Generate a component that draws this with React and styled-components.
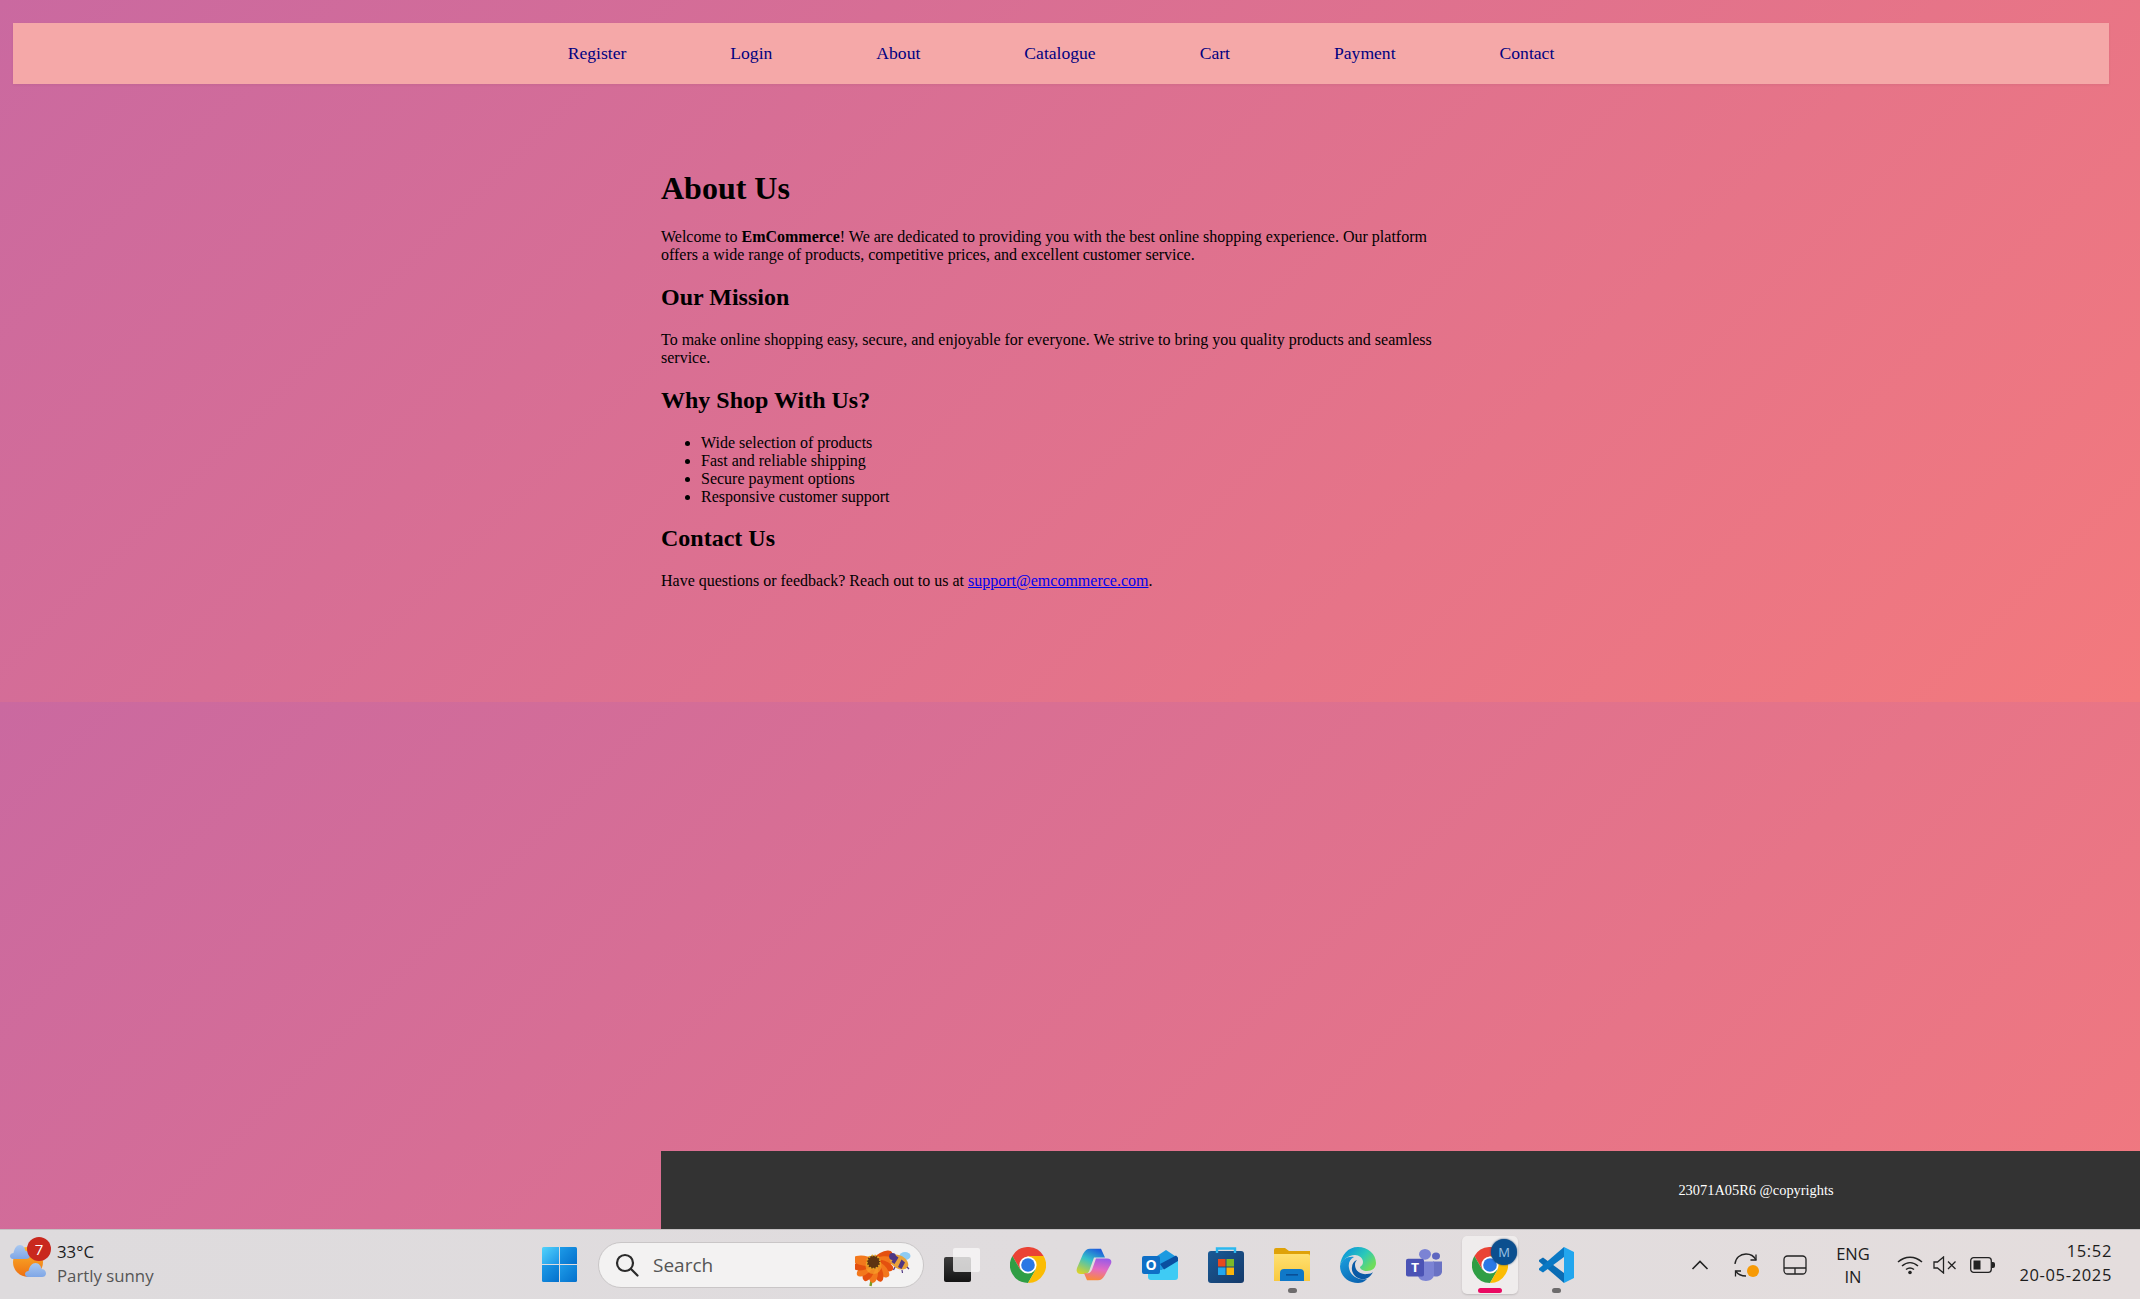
import React from "react";
import styled, { createGlobalStyle } from "styled-components";

const GlobalStyle = createGlobalStyle`
  html, body {
    margin: 0;
    padding: 0;
    height: 100%;
  }
  body {
    font-family: "Liberation Serif", "Times New Roman", serif;
    overflow: hidden;
  }
`;

const navLinks = ["Register", "Login", "About", "Catalogue", "Cart", "Payment", "Contact"];

const reasons = [
  "Wide selection of products",
  "Fast and reliable shipping",
  "Secure payment options",
  "Responsive customer support",
];

function WindowsIcon() {
  return (
    <svg width="35" height="35" viewBox="0 0 35 35">
      <defs>
        <linearGradient id="winA" x1="0" y1="0" x2="1" y2="1">
          <stop offset="0" stopColor="#52d3fb" />
          <stop offset="1" stopColor="#1b93e6" />
        </linearGradient>
        <linearGradient id="winB" x1="0" y1="0" x2="1" y2="1">
          <stop offset="0" stopColor="#1d9be8" />
          <stop offset="1" stopColor="#0470cc" />
        </linearGradient>
      </defs>
      <path d="M1.5 0H17V17H0V1.5A1.5 1.5 0 0 1 1.5 0Z" fill="url(#winA)" />
      <path d="M18 0H33.5A1.5 1.5 0 0 1 35 1.5V17H18Z" fill="url(#winB)" />
      <path d="M0 18H17V35H1.5A1.5 1.5 0 0 1 0 33.5Z" fill="url(#winB)" />
      <path d="M18 18H35V33.5A1.5 1.5 0 0 1 33.5 35H18Z" fill="url(#winB)" />
    </svg>
  );
}

function SearchGlass() {
  return (
    <svg width="24" height="24" viewBox="0 0 24 24" fill="none" stroke="#2b2b2b" strokeWidth="2.2" strokeLinecap="round">
      <circle cx="10" cy="10" r="8" />
      <path d="M16 16L22.5 22.5" />
    </svg>
  );
}

function SearchArt() {
  const petals = [-118, -94, -70, -46, -22, 2, 26, 50, 74, 98];
  return (
    <svg width="56" height="46" viewBox="0 0 56 46">
      <path d="M17 36L15.5 44" stroke="#7f9a22" strokeWidth="2.4" />
      {petals.map((a, i) => (
        <ellipse
          key={a}
          cx="18.5"
          cy="30"
          rx="5"
          ry="11"
          fill={i % 2 ? "#f3781c" : "#e4500f"}
          transform={`rotate(${a} 18.5 20)`}
        />
      ))}
      <circle cx="18.5" cy="24" r="8" fill="#f7a32a" fillOpacity="0.7" />
      <circle cx="18.5" cy="20" r="6.6" fill="#5e3412" stroke="#e2a823" strokeWidth="1.8" strokeDasharray="1.6 1.6" />
      <ellipse cx="50" cy="14" rx="5.5" ry="4" fill="#8ecbf2" />
      <ellipse cx="44" cy="20" rx="10" ry="6.5" fill="#e8a23a" transform="rotate(30 44 20)" />
      <path d="M40 13L36.5 20L39.5 22L43.5 15.5Z M46.5 17.5L43 25L46.5 27L50 20.5Z" fill="#4f3783" />
      <circle cx="37.5" cy="14.5" r="3.4" fill="#4f3783" />
      <path d="M40 25L38.5 28M47 28L47.5 31M52 25L54 27" stroke="#4f3783" strokeWidth="1.2" />
    </svg>
  );
}

function TaskViewIcon() {
  return (
    <svg width="36" height="34" viewBox="0 0 36 34">
      <defs>
        <linearGradient id="tvDark" x1="0" y1="0" x2="0" y2="1">
          <stop offset="0" stopColor="#3c3c3c" />
          <stop offset="1" stopColor="#141414" />
        </linearGradient>
      </defs>
      <rect x="0" y="9" width="27" height="25" rx="2" fill="url(#tvDark)" />
      <rect x="9" y="0" width="27" height="24" rx="2" fill="#f7f6f6" fillOpacity="0.8" />
    </svg>
  );
}

function ChromeIcon() {
  return (
    <svg width="36" height="36" viewBox="0 0 36 36">
      <path d="M33.6 9A18 18 0 0 0 2.4 9L10.2 22.5L18 9Z" fill="#ea4335" />
      <path d="M2.4 9A18 18 0 0 0 18 36L25.8 22.5H10.2Z" fill="#2f9e44" />
      <path d="M18 36A18 18 0 0 0 33.6 9H18L25.8 22.5Z" fill="#fbbc04" />
      <circle cx="18" cy="18" r="8.6" fill="#fff" />
      <circle cx="18" cy="18" r="6.8" fill="#2a78e4" />
    </svg>
  );
}

function CopilotIcon() {
  return (
    <svg width="36" height="33" viewBox="0 0 36 38" preserveAspectRatio="none">
      <defs>
        <linearGradient id="copA" x1="0.7" y1="0" x2="0.2" y2="1">
          <stop offset="0" stopColor="#1f5fdc" />
          <stop offset="0.45" stopColor="#35c1c8" />
          <stop offset="1" stopColor="#d9d22a" />
        </linearGradient>
        <linearGradient id="copB" x1="0.6" y1="0" x2="0.4" y2="1">
          <stop offset="0" stopColor="#9a5be8" />
          <stop offset="0.5" stopColor="#e56ac0" />
          <stop offset="1" stopColor="#f98a3c" />
        </linearGradient>
      </defs>
      <path d="M14 1H25L29 11H18L13 27C12 29 10 30 8 30H5C1 30 0 27 1 23L7 7C9 3 11 1 14 1Z" fill="url(#copA)" />
      <path d="M22 37H11L8 29H12C14 29 15 27 16 25L20 12H31C35 12 36 15 35 18L29 31C27 35 25 37 22 37Z" fill="url(#copB)" />
    </svg>
  );
}

function OutlookIcon() {
  return (
    <svg width="36" height="30" viewBox="0 0 36 30">
      <path d="M6 20H20L36 9V27A3 3 0 0 1 33 30H9A3 3 0 0 1 6 27Z" fill="#3fcbf4" />
      <path d="M12 8L24 0L36 8L36 10L20 20H12Z" fill="#1c9ae0" />
      <path d="M18 14L34 5.5L36 7.5V11L22 19.5Z" fill="#0a4fa0" />
      <rect x="0" y="6" width="18" height="18" rx="2" fill="#0f6fc6" />
      <text x="9" y="20" textAnchor="middle" fontFamily="Open Sans, sans-serif" fontWeight="700" fontSize="14" fill="#fff">O</text>
    </svg>
  );
}

function StoreIcon() {
  return (
    <svg width="36" height="36" viewBox="0 0 36 36">
      <defs>
        <linearGradient id="bag" x1="0" y1="0" x2="1" y2="1">
          <stop offset="0" stopColor="#1a5a96" />
          <stop offset="1" stopColor="#153a6a" />
        </linearGradient>
      </defs>
      <rect x="0" y="4" width="36" height="32" rx="3" fill="url(#bag)" />
      <path d="M9 6V1.5H27V6" fill="none" stroke="#2bb8ef" strokeWidth="2.4" />
      <rect x="10" y="12" width="7.5" height="7.5" fill="#e8491f" />
      <rect x="18.5" y="12" width="7.5" height="7.5" fill="#7db928" />
      <rect x="10" y="20.5" width="7.5" height="7.5" fill="#22a7ee" />
      <rect x="18.5" y="20.5" width="7.5" height="7.5" fill="#fbb40a" />
    </svg>
  );
}

function FolderIcon() {
  return (
    <svg width="36" height="34" viewBox="0 0 36 34">
      <defs>
        <linearGradient id="folder" x1="0" y1="0" x2="0" y2="1">
          <stop offset="0" stopColor="#ffe071" />
          <stop offset="1" stopColor="#f9c93f" />
        </linearGradient>
      </defs>
      <path d="M0 2A2 2 0 0 1 2 0H11L15 3H36V8H0Z" fill="#dfa208" />
      <path d="M0 6H34A2 2 0 0 1 36 8V33H0Z" fill="url(#folder)" />
      <path d="M6 33V25A4 4 0 0 1 10 21H26A4 4 0 0 1 30 25V33Z" fill="#0f78c8" />
      <rect x="12" y="26" width="12" height="1.6" fill="#0a4f96" />
    </svg>
  );
}

function EdgeIcon() {
  return (
    <svg width="36" height="36" viewBox="0 0 36 36">
      <defs>
        <linearGradient id="edgeA" x1="0.2" y1="0.1" x2="1" y2="0.6">
          <stop offset="0" stopColor="#0f9ad8" />
          <stop offset="0.55" stopColor="#2cc9b8" />
          <stop offset="1" stopColor="#6fdc5c" />
        </linearGradient>
        <linearGradient id="edgeB" x1="0" y1="0" x2="0.7" y2="1">
          <stop offset="0" stopColor="#1aa0e0" />
          <stop offset="1" stopColor="#0b63b0" />
        </linearGradient>
      </defs>
      <path d="M18 0C28 0 36 7 36 16C36 21 32 24 27 24C23 24 20 22 20 20C21 19 23 18 23 15C23 11 19 8 15 8C8 8 2 13 0 19C1 8 8 0 18 0Z" fill="url(#edgeA)" />
      <path d="M0 19C2 12 8 9 14 10C10 12 8 16 9 21C10 28 18 34 27 32C24 35 21 36 18 36C8 36 0 29 0 19Z" fill="url(#edgeB)" />
      <path d="M15 18C15 24 21 28 27 27C30 27 32 26 33 25C30 31 25 33 21 32C15 31 11 25 12 20C12 17 14 14 17 13C15.5 14.5 15 16 15 18Z" fill="#0a5aa6" />
    </svg>
  );
}

function TeamsIcon() {
  return (
    <svg width="36" height="32" viewBox="0 0 36 36" preserveAspectRatio="none">
      <circle cx="19" cy="6" r="6" fill="#7b83d4" />
      <circle cx="30" cy="8" r="4" fill="#5f67c0" />
      <path d="M27 14H36V25C36 29 33 31 30 31C28.5 31 27 30.5 27 30Z" fill="#6a72c4" />
      <path d="M12 14H28V29C28 33 24 36 20 36C15 36 12 33 12 29Z" fill="#7b83d4" />
      <rect x="0" y="11" width="18" height="20" rx="2" fill="#4b53b5" />
      <text x="9" y="26" textAnchor="middle" fontFamily="Open Sans, sans-serif" fontWeight="700" fontSize="14" fill="#fff">T</text>
    </svg>
  );
}

function VsCodeIcon() {
  return (
    <svg width="36" height="36" viewBox="0 0 36 36">
      <path d="M26 36V26L5 10.5L1 13V14.5Z" fill="#0a6cb4" />
      <path d="M26 0V10L5 25.5L1 23V21.5Z" fill="#0a78c4" />
      <path d="M26 0L36 5V31L26 36Z" fill="#22a6ee" />
    </svg>
  );
}

function CaretIcon() {
  return (
    <svg width="18" height="12" viewBox="0 0 18 12" fill="none" stroke="#222" strokeWidth="1.6">
      <path d="M1.5 10L9 2.5L16.5 10" />
    </svg>
  );
}

function SyncIcon() {
  return (
    <svg width="26" height="26" viewBox="0 0 26 26" fill="none" stroke="#222" strokeWidth="1.3">
      <path d="M1 12C1.5 6 6 2 12 2C17 2 20 4 22 8" />
      <path d="M22 2.5V8H16.5" />
      <path d="M12 24C7 24 4 22.5 1.5 19" />
      <path d="M1.5 24.5V19H7" />
      <circle cx="19" cy="19" r="6" fill="#f79a05" stroke="none" />
    </svg>
  );
}

function TouchpadIcon() {
  return (
    <svg width="24" height="20" viewBox="0 0 24 20" fill="none" stroke="#222" strokeWidth="1.3">
      <rect x="1" y="1" width="22" height="18" rx="3.5" />
      <path d="M1 13H23M12 13V19" />
    </svg>
  );
}

function WifiIcon() {
  return (
    <svg width="26" height="20" viewBox="0 0 26 20" fill="none" stroke="#222" strokeWidth="1.5">
      <path d="M1 7C8 0.5 18 0.5 25 7" />
      <path d="M5 11C10 6.5 16 6.5 21 11" />
      <path d="M9 14.5C11.5 12.5 14.5 12.5 17 14.5" />
      <circle cx="13" cy="17.5" r="1.8" fill="#222" stroke="none" />
    </svg>
  );
}

function MuteIcon() {
  return (
    <svg width="24" height="18" viewBox="0 0 24 18" fill="none" stroke="#222" strokeWidth="1.3">
      <path d="M1 6H4.5L10.5 1V17L4.5 12H1Z" />
      <path d="M15 5.5L22.5 13M22.5 5.5L15 13" />
    </svg>
  );
}

function BatteryIcon() {
  return (
    <svg width="25" height="16" viewBox="0 0 25 16">
      <rect x="0.7" y="0.7" width="20.6" height="14.6" rx="3" fill="none" stroke="#222" strokeWidth="1.3" />
      <rect x="3.5" y="3.5" width="7" height="9" fill="#222" />
      <path d="M22 5H23A2 2 0 0 1 25 7V9A2 2 0 0 1 23 11H22Z" fill="#222" />
    </svg>
  );
}

function WeatherIcon() {
  return (
    <svg width="36" height="32" viewBox="0 0 36 32">
      <defs>
        <linearGradient id="sun" x1="0.5" y1="0" x2="0.5" y2="1">
          <stop offset="0" stopColor="#fbb72c" />
          <stop offset="1" stopColor="#ee6f12" />
        </linearGradient>
        <linearGradient id="cloud" x1="0.5" y1="0" x2="0.5" y2="1">
          <stop offset="0" stopColor="#a9c8f0" />
          <stop offset="1" stopColor="#7fa6e6" />
        </linearGradient>
      </defs>
      <circle cx="18" cy="17" r="15" fill="url(#sun)" />
      <path d="M3 14C1 14 0 12.5 0 11C0 9 2 8 3.5 8C4.5 3 6.500 0 10 0C13 0 15 3 15.500 6C18 6 20 8 20 10.500C20 13 18 14 16 14Z" fill="url(#cloud)" />
      <path d="M18 32C16 32 15 30.500 15 29C15 27 17 26 18.500 26C19.500 21 22 18 25.500 18C29 18 31 21 31.500 24C34 24 36 26 36 28.500C36 31 34 32 32 32Z" fill="url(#cloud)" />
    </svg>
  );
}

export default function App() {
  return (
    <>
      <GlobalStyle />
      <Shell>
        <Viewport>
          <Navbar>
            {navLinks.map((label) => (
              <NavLink key={label} href="#">
                {label}
              </NavLink>
            ))}
          </Navbar>
          <Main>
            <h1>About Us</h1>
            <p>
              Welcome to <strong>EmCommerce</strong>! We are dedicated to providing you with the best online shopping
              experience. Our platform offers a wide range of products, competitive prices, and excellent customer
              service.
            </p>
            <h2>Our Mission</h2>
            <p>
              To make online shopping easy, secure, and enjoyable for everyone. We strive to bring you quality products
              and seamless service.
            </p>
            <h2>Why Shop With Us?</h2>
            <ul>
              {reasons.map((item) => (
                <li key={item}>{item}</li>
              ))}
            </ul>
            <h2>Contact Us</h2>
            <p>
              Have questions or feedback? Reach out to us at <a href="#">support@emcommerce.com</a>.
            </p>
          </Main>
          <Footer>
            <FooterText>23071A05R6 @copyrights</FooterText>
          </Footer>
        </Viewport>
        <Taskbar>
          <Weather>
            <WeatherArt>
              <WeatherIcon />
              <WeatherBadge>7</WeatherBadge>
            </WeatherArt>
            <WeatherText>
              <span>33°C</span>
              <WeatherNote>Partly sunny</WeatherNote>
            </WeatherText>
          </Weather>
          <CenterGroup>
            <StartButton>
              <WindowsIcon />
            </StartButton>
            <SearchBox>
              <SearchGlass />
              <SearchLabel>Search</SearchLabel>
              <SearchArt />
            </SearchBox>
            <AppRow>
              <AppSlot><TaskViewIcon /></AppSlot>
              <AppSlot><ChromeIcon /></AppSlot>
              <AppSlot><CopilotIcon /></AppSlot>
              <AppSlot><OutlookIcon /></AppSlot>
              <AppSlot><StoreIcon /></AppSlot>
              <AppSlot>
                <FolderIcon />
                <RunningDot />
              </AppSlot>
              <AppSlot><EdgeIcon /></AppSlot>
              <AppSlot><TeamsIcon /></AppSlot>
              <AppSlot>
                <ActiveTile />
                <IconLift>
                  <ChromeIcon />
                  <ProfileBadge>M</ProfileBadge>
                </IconLift>
                <ActiveBar />
              </AppSlot>
              <AppSlot>
                <VsCodeIcon />
                <RunningDot />
              </AppSlot>
            </AppRow>
          </CenterGroup>
          <Tray>
            <TraySlot $w={36}><CaretIcon /></TraySlot>
            <TraySlot $w={36} $ml={11}><SyncIcon /></TraySlot>
            <TraySlot $w={36} $ml={12}><TouchpadIcon /></TraySlot>
            <LangSlot>
              <span>ENG</span>
              <span>IN</span>
            </LangSlot>
            <TraySlot $w={30} $ml={13}><WifiIcon /></TraySlot>
            <TraySlot $w={30} $ml={5}><MuteIcon /></TraySlot>
            <TraySlot $w={30} $ml={7}><BatteryIcon /></TraySlot>
            <Clock>
              <span>15:52</span>
              <span>20-05-2025</span>
            </Clock>
          </Tray>
        </Taskbar>
      </Shell>
    </>
  );
}

const Shell = styled.div`
  display: flex;
  flex-direction: column;
  height: 100vh;
  overflow: hidden;
`;

const Viewport = styled.div`
  flex: 1;
  min-height: 0;
  display: flex;
  flex-direction: column;
  overflow: hidden;
  padding-top: 23px;
  box-sizing: border-box;
  background-image: linear-gradient(135deg, #ca69a0, #f3797d);
  background-size: 100% 702px;
  background-repeat: repeat;
`;

const Navbar = styled.nav`
  flex: none;
  height: 61px;
  margin: 0 31px 0 13px;
  display: flex;
  align-items: center;
  justify-content: center;
  gap: 104px;
  background: #f5a8a8;
  box-shadow: 0 1px 3px rgba(0, 0, 0, 0.06);
`;

const NavLink = styled.a`
  font-size: 17.6px;
  color: #000080;
  text-decoration: none;
`;

const Main = styled.main`
  flex: none;
  box-sizing: border-box;
  width: 800px;
  margin-left: 661px;
  padding-top: 86px;
  color: #000;
  font-size: 16px;

  h1,
  h2,
  p,
  ul {
    margin-bottom: 0;
  }
  h1 {
    margin-top: 0;
    font-size: 32px;
  }
  h2 {
    font-size: 24px;
    margin-top: 20px;
  }
  ul + h2 {
    margin-top: 19px;
  }
  p {
    margin-top: 20px;
  }
  h1 + p {
    margin-top: 21px;
  }
  ul {
    margin-top: 20px;
    padding-left: 40px;
  }
  a {
    color: #0000ee;
  }
`;

const Footer = styled.footer`
  flex: none;
  margin-top: auto;
  margin-left: 661px;
  width: 2190px;
  height: 78px;
  display: flex;
  align-items: center;
  justify-content: center;
  background: #333;
`;

const FooterText = styled.span`
  color: #fff;
  font-size: 14.4px;
`;

const Taskbar = styled.div`
  flex: none;
  height: 70px;
  box-sizing: border-box;
  display: flex;
  align-items: center;
  padding-left: 10px;
  border-top: 1px solid #c4c1c3;
  background: linear-gradient(90deg, #dedbdd, #e0dcde 50%, #e4dddd);
  font-family: "Open Sans", "Noto Sans", sans-serif;
  color: #1c1c1c;
`;

const Weather = styled.div`
  flex: none;
  width: 532px;
  display: flex;
  align-items: center;
  gap: 11px;
`;

const WeatherArt = styled.div`
  position: relative;
  width: 36px;
  height: 32px;
  margin-top: -7px;
`;

const WeatherBadge = styled.span`
  position: absolute;
  left: 17px;
  top: -8px;
  width: 24px;
  height: 24px;
  border-radius: 50%;
  background: #c9281e;
  color: #fff;
  font-size: 15px;
  line-height: 24px;
  text-align: center;
`;

const WeatherText = styled.div`
  display: flex;
  flex-direction: column;
  margin-top: -2px;
  font-size: 16.8px;
  line-height: 24px;
`;

const WeatherNote = styled.span`
  color: #555;
`;

const CenterGroup = styled.div`
  flex: none;
  display: flex;
  align-items: center;
`;

const StartButton = styled.div`
  width: 35px;
  height: 35px;
  margin-right: 21px;
`;

const SearchBox = styled.div`
  position: relative;
  box-sizing: border-box;
  width: 326px;
  height: 46px;
  display: flex;
  align-items: center;
  padding: 0 12px 0 16px;
  border-radius: 23px;
  border: 1.5px solid #c9c6c7;
  background: #f3f2f2;
`;

const SearchLabel = styled.span`
  flex: 1;
  margin-left: 14px;
  font-size: 19px;
  color: #555;
`;

const AppRow = styled.div`
  display: flex;
  margin-left: 5px;
`;

const AppSlot = styled.div`
  position: relative;
  width: 66px;
  height: 69px;
  display: flex;
  align-items: center;
  justify-content: center;
  flex: none;
`;

const IconLift = styled.div`
  position: relative;
  width: 36px;
  height: 36px;
`;

const RunningDot = styled.span`
  position: absolute;
  left: 50%;
  bottom: 6px;
  width: 9px;
  height: 5px;
  margin-left: -4px;
  border-radius: 3px;
  background: #6d6b6c;
`;

const ActiveTile = styled.span`
  position: absolute;
  left: 5px;
  right: 5px;
  top: 6px;
  bottom: 5px;
  border-radius: 5px;
  background: #efecec;
  box-shadow: 0 1px 2px rgba(0, 0, 0, 0.15);
`;

const ActiveBar = styled.span`
  position: absolute;
  left: 50%;
  bottom: 6px;
  width: 24px;
  height: 5px;
  margin-left: -12px;
  border-radius: 3px;
  background: #ea0a62;
`;

const ProfileBadge = styled.span`
  position: absolute;
  left: 19px;
  top: -8px;
  width: 26px;
  height: 26px;
  border-radius: 50%;
  background: #0b4f8f;
  box-shadow: 0 0 2px #0b3a6a;
  color: #9cc3e6;
  font-size: 13px;
  line-height: 26px;
  text-align: center;
`;

const Tray = styled.div`
  flex: none;
  margin-left: auto;
  display: flex;
  align-items: center;
  padding-right: 28px;
`;

const TraySlot = styled.div`
  width: ${(p) => p.$w}px;
  margin-left: ${(p) => p.$ml || 0}px;
  display: flex;
  align-items: center;
  justify-content: center;
`;

const LangSlot = styled.div`
  width: 58px;
  margin-left: 11px;
  display: flex;
  flex-direction: column;
  align-items: center;
  font-size: 16.5px;
  line-height: 23px;
`;

const Clock = styled.div`
  width: 100px;
  margin-top: -3px;
  margin-left: 15px;
  display: flex;
  flex-direction: column;
  align-items: flex-end;
  font-size: 16.5px;
  line-height: 24px;
  letter-spacing: 0.65px;
  white-space: nowrap;
`;
